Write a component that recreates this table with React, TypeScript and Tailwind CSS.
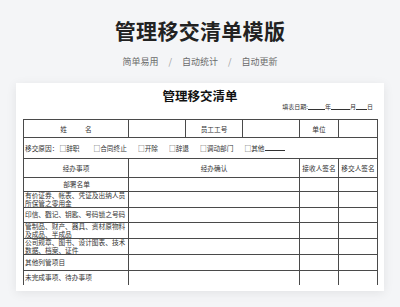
import React from 'react';

const font = { fontFamily: '"Noto Sans CJK SC", "Noto Sans", sans-serif' };

const items: { lines: string[]; h: string; center?: boolean }[] = [
  { lines: ['部署名单'], h: 'h-[14px]', center: true },
  { lines: ['有价证券、帐表、凭证及出纳人员', '所保管之零用金'], h: 'h-[16px]' },
  { lines: ['印信、戳记、钥匙、号码锁之号码'], h: 'h-[15px]' },
  { lines: ['管制品、财产、器具、资材原物料', '及成品、半成品'], h: 'h-[16px]' },
  { lines: ['公司规章、图书、设计图表、技术', '数据、档案、证件'], h: 'h-[16px]' },
  { lines: ['其他列管项目'], h: 'h-[16px]' },
  { lines: ['未完成事项、待办事项'], h: 'h-[14px]' },
];

const reasons = ['辞职', '合同终止', '开除', '辞退', '调动部门'];

const Line = ({ w }: { w: string }) => (
  <span className={`inline-block ${w} h-[1px] bg-[#333] mb-[1px]`} />
);

const App = () => {
  return (
    <div className="w-[400px] h-[307px] overflow-hidden bg-[#f4f5f7] flex flex-col items-center" style={font}>
      <h1 className="mt-[16px] h-[28px] leading-[28px] text-[21px] font-bold text-[#222] tracking-[0.3px]">
        管理移交清单模版
      </h1>
      <div className="mt-[11px] h-[14px] leading-[14px] flex items-center text-[9px] text-[#6b6b6b]">
        <span>简单易用</span>
        <span className="mx-[10px] text-[#999]">/</span>
        <span>自动统计</span>
        <span className="mx-[10px] text-[#999]">/</span>
        <span>自动更新</span>
      </div>

      <div className="mt-[14px] w-[368px] h-[208px] bg-white shadow-[0_2px_10px_rgba(0,0,0,0.08)] flex flex-col px-[7px] text-[#333]">
        <div className="mt-[6px] h-[14px] leading-[14px] text-center text-[12.5px] font-semibold text-[#111]">
          管理移交清单
        </div>
        <div className="mt-[-1px] h-[9px] leading-[9px] text-[6px] flex justify-end items-end pr-[4px]">
          <span>填表日期:</span>
          <Line w="w-[17px]" />
          <span>年</span>
          <Line w="w-[19px]" />
          <span>月</span>
          <Line w="w-[11px]" />
          <span>日</span>
        </div>

        <div className="mt-[8px] w-[355px] border-t border-x border-[#4a4a4a] text-[6.7px] leading-[8px]">
          <div className="flex h-[18px] border-b border-[#4a4a4a]">
            <div className="w-[105px] border-r border-[#4a4a4a] flex items-center justify-center">
              <span>姓</span>
              <span className="ml-[18px]">名</span>
            </div>
            <div className="w-[57px] border-r border-[#4a4a4a]" />
            <div className="w-[57px] border-r border-[#4a4a4a] flex items-center justify-center">员工工号</div>
            <div className="w-[57px] border-r border-[#4a4a4a]" />
            <div className="w-[39px] border-r border-[#4a4a4a] flex items-center justify-center">单位</div>
            <div className="flex-1" />
          </div>

          <div className="flex items-center h-[21px] border-b border-[#4a4a4a] pl-[1px] whitespace-nowrap">
            <span>移交原因：</span>
            {reasons.map((r, i) => (
              <span key={r} className={i === 0 ? 'ml-[1px]' : i === 1 ? 'ml-[14px]' : 'ml-[11px]'}>
                □{r}
              </span>
            ))}
            <span className="ml-[11px] flex items-end">
              □其他
              <Line w="w-[20px]" />
            </span>
          </div>

          <div className="flex h-[19px] border-b border-[#4a4a4a]">
            <div className="w-[105px] border-r border-[#4a4a4a] flex items-center justify-center">经办事项</div>
            <div className="w-[171px] border-r border-[#4a4a4a] flex items-center justify-center">经办确认</div>
            <div className="w-[39px] border-r border-[#4a4a4a] flex items-center justify-center whitespace-nowrap">接收人签名</div>
            <div className="flex-1 flex items-center justify-center whitespace-nowrap">移交人签名</div>
          </div>

          {items.map((it, i) => (
            <div
              key={i}
              className={`flex ${it.h} ${i === items.length - 1 ? '' : 'border-b border-[#4a4a4a]'}`}
            >
              <div
                className={`w-[105px] border-r border-[#4a4a4a] flex flex-col justify-center pl-[1px] whitespace-nowrap leading-[7.5px] ${
                  it.center ? 'items-center' : ''
                }`}
              >
                {it.lines.map((l) => (
                  <span key={l} className="block">{l}</span>
                ))}
              </div>
              <div className="w-[171px] border-r border-[#4a4a4a]" />
              <div className="w-[39px] border-r border-[#4a4a4a]" />
              <div className="flex-1" />
            </div>
          ))}
        </div>
      </div>
    </div>
  );
};

export default App;
